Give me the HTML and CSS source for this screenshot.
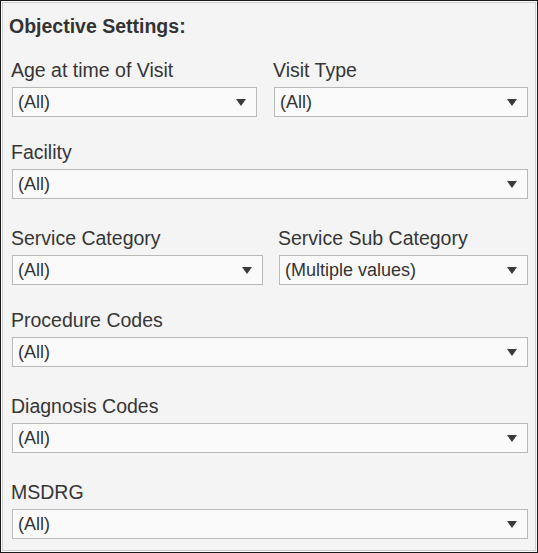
FILE: index.html
```html
<!DOCTYPE html>
<html>
<head>
<meta charset="utf-8">
<link rel="stylesheet" href="styles.css">
</head>
<body>
<div class="frame">
  <div class="panel">
    <div class="title">Objective Settings:</div>

    <div class="row row-1 cols-a">
      <div class="field">
        <div class="label">Age at time of Visit</div>
        <div class="select"><span>(All)</span><i class="arrow"></i></div>
      </div>
      <div class="field field-right">
        <div class="label">Visit Type</div>
        <div class="select"><span>(All)</span><i class="arrow"></i></div>
      </div>
    </div>

    <div class="row gap-sm">
      <div class="field">
        <div class="label">Facility</div>
        <div class="select"><span>(All)</span><i class="arrow"></i></div>
      </div>
    </div>

    <div class="row gap-lg cols-b">
      <div class="field">
        <div class="label">Service Category</div>
        <div class="select"><span>(All)</span><i class="arrow"></i></div>
      </div>
      <div class="field field-right">
        <div class="label">Service Sub Category</div>
        <div class="select"><span>(Multiple values)</span><i class="arrow"></i></div>
      </div>
    </div>

    <div class="row gap-sm">
      <div class="field">
        <div class="label">Procedure Codes</div>
        <div class="select"><span>(All)</span><i class="arrow"></i></div>
      </div>
    </div>

    <div class="row gap-lg">
      <div class="field">
        <div class="label">Diagnosis Codes</div>
        <div class="select"><span>(All)</span><i class="arrow"></i></div>
      </div>
    </div>

    <div class="row gap-lg">
      <div class="field">
        <div class="label">MSDRG</div>
        <div class="select"><span>(All)</span><i class="arrow"></i></div>
      </div>
    </div>
  </div>
</div>
</body>
</html>
```

FILE: styles.css
```css
html, body {
  margin: 0;
  padding: 0;
  background: #ffffff;
}

body {
  font-family: "Liberation Sans", Arial, sans-serif;
  color: #333333;
}

.frame {
  width: 538px;
  height: 553px;
  box-sizing: border-box;
  border: 1px solid #1a1a1a;
  padding: 1px;
  background: #fbfbfb;
}

.panel {
  box-sizing: border-box;
  height: 100%;
  border: 1px solid #cfcfcf;
  background: #f4f4f4;
  padding: 11px 7px 0 9px;
}

.title {
  font-weight: bold;
  font-size: 19.5px;
  line-height: 24px;
  color: #333333;
  margin-left: -3px;
}

.row {
  display: grid;
  grid-template-columns: 1fr;
}

.row-1 {
  margin-top: 20px;
}

.gap-sm {
  margin-top: 23px;
}

.gap-lg {
  margin-top: 27px;
}

.cols-a {
  grid-template-columns: 245px 254px;
  column-gap: 17px;
}

.cols-b {
  grid-template-columns: 251px 249px;
  column-gap: 16px;
}

.field {
  display: flex;
  flex-direction: column;
}

.label {
  font-size: 19.5px;
  line-height: 24px;
  height: 24px;
  margin-left: -1px;
  margin-bottom: 5px;
  color: #363636;
  white-space: nowrap;
}

.select {
  box-sizing: border-box;
  height: 30px;
  border: 1px solid #b9b9b9;
  background: #fafafa;
  display: flex;
  align-items: center;
  justify-content: space-between;
  padding: 0 10px 0 5px;
  font-size: 18px;
  color: #333333;
}

.select span {
  white-space: nowrap;
  line-height: 28px;
}

.arrow {
  display: block;
  width: 0;
  height: 0;
  border-left: 5px solid transparent;
  border-right: 5px solid transparent;
  border-top: 7px solid #3a3a3a;
  margin-top: 1px;
}
```
